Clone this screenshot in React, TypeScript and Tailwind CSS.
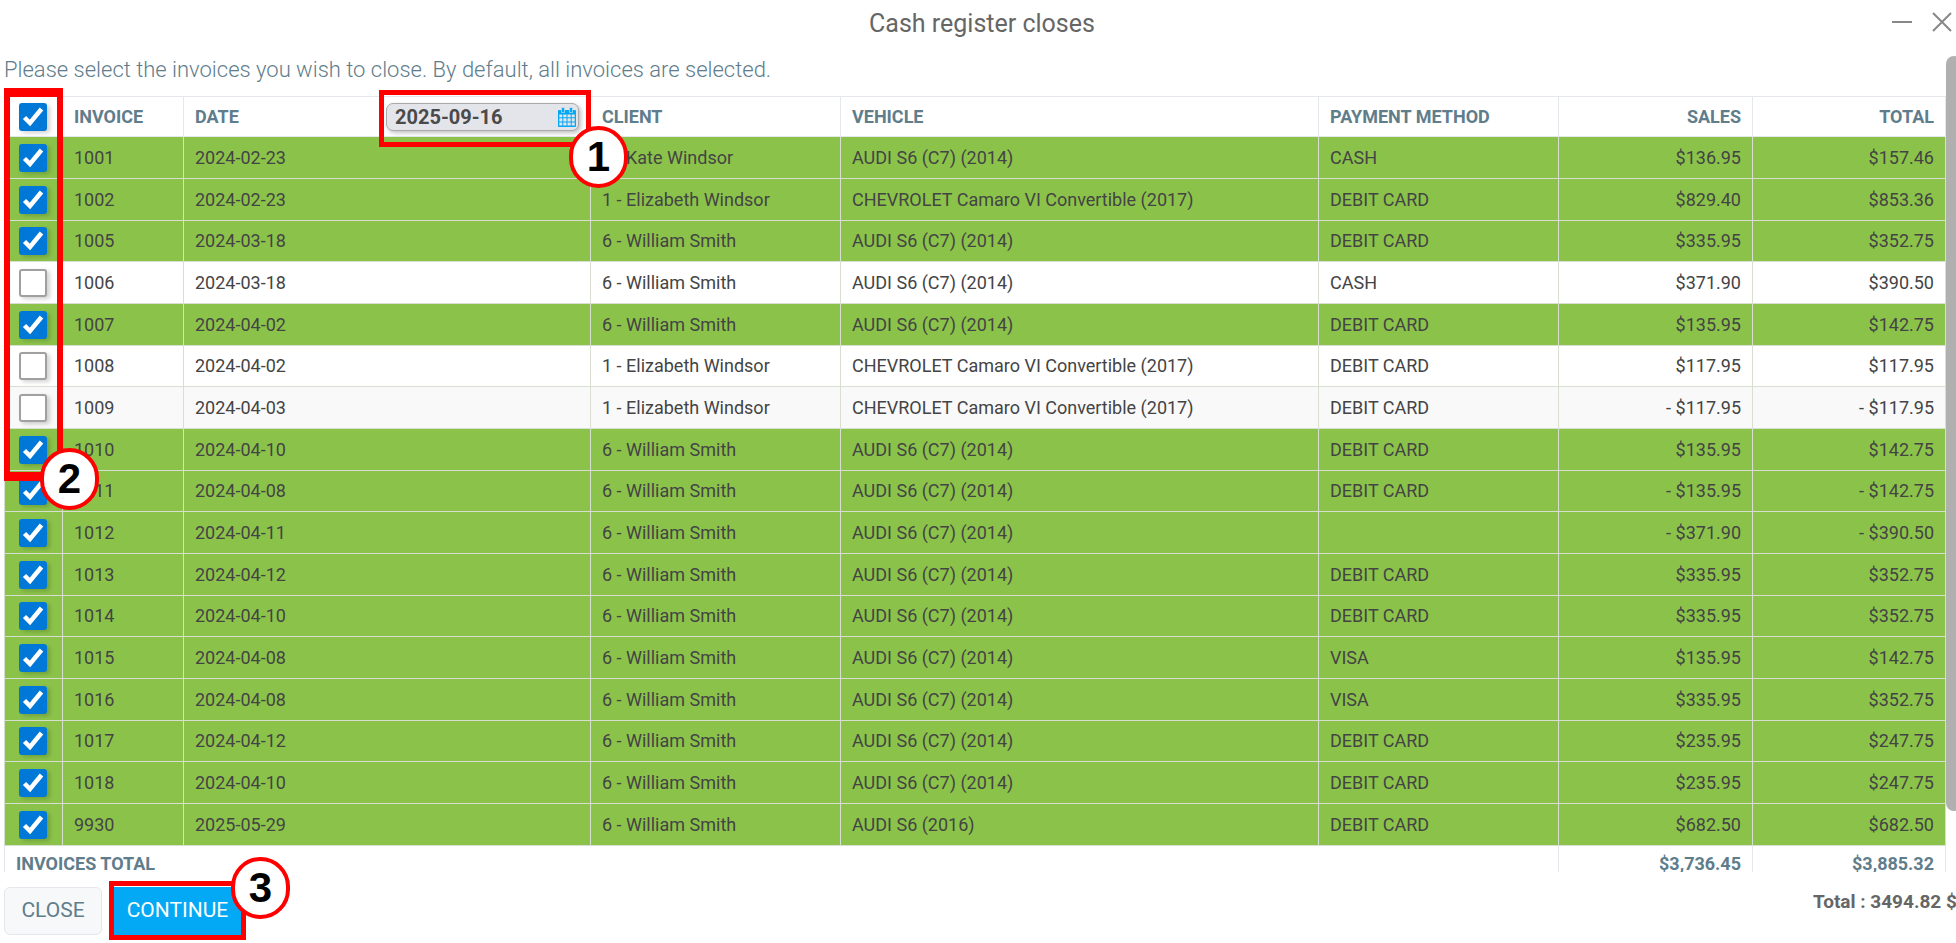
import { useState } from 'react';
import clsx from 'clsx';

type Invoice = {
  id: number;
  date: string;
  client: string;
  vehicle: string;
  payment: string;
  sales: string;
  total: string;
  selected: boolean;
};

const KATE = '1 - Kate Windsor';
const ELIZABETH = '1 - Elizabeth Windsor';
const WILLIAM = '6 - William Smith';
const AUDI = 'AUDI S6 (C7) (2014)';
const CAMARO = 'CHEVROLET Camaro VI Convertible (2017)';

const INVOICES: Invoice[] = [
  { id: 1001, date: '2024-02-23', client: KATE, vehicle: AUDI, payment: 'CASH', sales: '$136.95', total: '$157.46', selected: true },
  { id: 1002, date: '2024-02-23', client: ELIZABETH, vehicle: CAMARO, payment: 'DEBIT CARD', sales: '$829.40', total: '$853.36', selected: true },
  { id: 1005, date: '2024-03-18', client: WILLIAM, vehicle: AUDI, payment: 'DEBIT CARD', sales: '$335.95', total: '$352.75', selected: true },
  { id: 1006, date: '2024-03-18', client: WILLIAM, vehicle: AUDI, payment: 'CASH', sales: '$371.90', total: '$390.50', selected: false },
  { id: 1007, date: '2024-04-02', client: WILLIAM, vehicle: AUDI, payment: 'DEBIT CARD', sales: '$135.95', total: '$142.75', selected: true },
  { id: 1008, date: '2024-04-02', client: ELIZABETH, vehicle: CAMARO, payment: 'DEBIT CARD', sales: '$117.95', total: '$117.95', selected: false },
  { id: 1009, date: '2024-04-03', client: ELIZABETH, vehicle: CAMARO, payment: 'DEBIT CARD', sales: '- $117.95', total: '- $117.95', selected: false },
  { id: 1010, date: '2024-04-10', client: WILLIAM, vehicle: AUDI, payment: 'DEBIT CARD', sales: '$135.95', total: '$142.75', selected: true },
  { id: 1011, date: '2024-04-08', client: WILLIAM, vehicle: AUDI, payment: 'DEBIT CARD', sales: '- $135.95', total: '- $142.75', selected: true },
  { id: 1012, date: '2024-04-11', client: WILLIAM, vehicle: AUDI, payment: '', sales: '- $371.90', total: '- $390.50', selected: true },
  { id: 1013, date: '2024-04-12', client: WILLIAM, vehicle: AUDI, payment: 'DEBIT CARD', sales: '$335.95', total: '$352.75', selected: true },
  { id: 1014, date: '2024-04-10', client: WILLIAM, vehicle: AUDI, payment: 'DEBIT CARD', sales: '$335.95', total: '$352.75', selected: true },
  { id: 1015, date: '2024-04-08', client: WILLIAM, vehicle: AUDI, payment: 'VISA', sales: '$135.95', total: '$142.75', selected: true },
  { id: 1016, date: '2024-04-08', client: WILLIAM, vehicle: AUDI, payment: 'VISA', sales: '$335.95', total: '$352.75', selected: true },
  { id: 1017, date: '2024-04-12', client: WILLIAM, vehicle: AUDI, payment: 'DEBIT CARD', sales: '$235.95', total: '$247.75', selected: true },
  { id: 1018, date: '2024-04-10', client: WILLIAM, vehicle: AUDI, payment: 'DEBIT CARD', sales: '$235.95', total: '$247.75', selected: true },
  { id: 9930, date: '2025-05-29', client: WILLIAM, vehicle: 'AUDI S6 (2016)', payment: 'DEBIT CARD', sales: '$682.50', total: '$682.50', selected: true },
];

function Checkbox({ label, checked, onChange }: { label: string; checked: boolean; onChange: () => void }) {
  return (
    <span className="relative block h-7 w-7">
      <input
        type="checkbox"
        aria-label={label}
        checked={checked}
        onChange={onChange}
        className="block h-7 w-7 appearance-none rounded-[3px] border-2 border-[#a0a0a0] bg-white shadow-[3px_2px_4px_rgba(0,0,0,0.18)] checked:border-[#0078d7] checked:bg-[#0078d7]"
      />
      {checked && (
        <svg viewBox="0 0 28 28" className="pointer-events-none absolute inset-0 h-7 w-7" fill="none" stroke="#fff" strokeWidth="4.500">
          <path d="M5.500 14.500 L11 20 L22.500 6" />
        </svg>
      )}
    </span>
  );
}

function Step({ n, className }: { n: number; className: string }) {
  return (
    <span
      className={clsx(
        "pointer-events-none absolute z-20 flex h-[62px] w-[59px] items-center justify-center rounded-full border-4 border-[#ff0000] bg-white font-['Liberation_Sans',sans-serif] text-[42px] leading-none font-bold text-black",
        className
      )}
    >
      {n}
    </span>
  );
}

function CalendarIcon() {
  return (
    <svg viewBox="0 0 18 20" className="h-5 w-[18px] shrink-0">
      <path fill="#03a9f4" d="M1 3h16q1 0 1 1v15q0 1-1 1H1q-1 0-1-1V4q0-1 1-1z" />
      <path fill="#03a9f4" stroke="#e4e5ea" strokeWidth=".6" d="M3.500 .5h3v5h-3zM11.500 .5h3v5h-3z" />
      <path
        fill="#e4e5ea"
        d="M1.300 7.500h3v2.800h-3zM5.300 7.500h3.200v2.800H5.300zM9.500 7.500h3.200v2.800H9.500zM13.700 7.500h3v2.800h-3zM1.300 11.300h3v3.200h-3zM5.300 11.300h3.200v3.200H5.300zM9.500 11.300h3.200v3.200H9.500zM13.700 11.300h3v3.200h-3zM1.300 15.500h3v3h-3zM5.300 15.500h3.200v3H5.300zM9.500 15.500h3.200v3H9.500zM13.700 15.500h3v3h-3z"
      />
    </svg>
  );
}

export default function App() {
  const [invoices, setInvoices] = useState(INVOICES);
  const [allChecked, setAllChecked] = useState(true);
  const [date, setDate] = useState('2025-09-16');

  const toggleAll = () => {
    setInvoices(invoices.map((inv) => ({ ...inv, selected: !allChecked })));
    setAllChecked(!allChecked);
  };

  const toggle = (id: number) => {
    setInvoices(invoices.map((inv) => (inv.id === id ? { ...inv, selected: !inv.selected } : inv)));
  };

  return (
    <div className="flex h-screen flex-col overflow-hidden bg-white font-[Roboto,sans-serif] text-[#444]">
      <header className="grid h-14 shrink-0 grid-cols-[1fr_auto_1fr] items-start pr-1">
        <h1 className="col-start-2 pt-2 pl-3 text-[25px] leading-8 text-[#666]">Cash register closes</h1>
        <div className="flex justify-end gap-5 pt-3 text-[#888]">
          <button type="button" aria-label="Minimize">
            <svg viewBox="0 0 20 20" className="h-5 w-5" stroke="currentColor" strokeWidth="2">
              <path d="M0 10h20" />
            </svg>
          </button>
          <button type="button" aria-label="Close window">
            <svg viewBox="0 0 20 20" className="h-5 w-5" stroke="currentColor" strokeWidth="2">
              <path d="M1 1l18 18M19 1L1 19" />
            </svg>
          </button>
        </div>
      </header>

      <main className="flex min-h-0 flex-1 overflow-hidden">
        <div className="min-w-0 flex-1 pl-1">
          <p className="h-10 text-[22px] leading-[28px] font-light text-[#607d8b]">
            Please select the invoices you wish to close. By default, all invoices are selected.
          </p>
          <table className="w-full table-fixed border-collapse text-left text-[18px] leading-5 [&_td]:border [&_td]:border-[#d8dfd0] [&_td]:py-0 [&_td]:pr-[11px] [&_td]:pl-[11px] [&_th]:border [&_th]:border-[#e4e8ec] [&_th]:py-0 [&_th]:pr-[11px] [&_th]:pl-[11px] [&_th]:font-bold [&_th]:text-[#607d8b] [&_tr>*:first-child:not([colspan])]:pl-[14px]">
            <colgroup>
              <col className="w-[58px]" />
              <col className="w-[121px]" />
              <col className="w-[407px]" />
              <col className="w-[250px]" />
              <col />
              <col className="w-[240px]" />
              <col className="w-[194px]" />
              <col className="w-[193px]" />
            </colgroup>
            <thead>
              <tr className="h-10">
                <th className="relative">
                  <Checkbox label="Select all invoices" checked={allChecked} onChange={toggleAll} />
                  <div className="pointer-events-none absolute -top-[9px] -left-px z-10 h-[393px] w-[59px] border-x-[6px] border-y-[9px] border-[#ff0000]">
                    <Step n={2} className="-right-[42px] -bottom-[38px]" />
                  </div>
                </th>
                <th>INVOICE</th>
                <th className="relative">
                  <div className="flex items-center justify-between">
                    DATE
                    <label className="relative flex h-7 w-[193px] items-center rounded-[7px] border border-[#aaa] bg-[#e4e5ea] pr-0.5 pl-2 shadow-[2px_2px_4px_rgba(0,0,0,0.25)]">
                      <input
                        type="text"
                        aria-label="Closing date"
                        value={date}
                        onChange={(e) => setDate(e.target.value)}
                        className="min-w-0 flex-1 text-[20px] leading-6 font-bold text-[#4a4a4a] outline-none"
                      />
                      <CalendarIcon />
                      <div className="pointer-events-none absolute -top-[14px] -right-[13px] -bottom-[17px] -left-[8px] z-10 border-[5px] border-[#ff0000]">
                        <Step n={1} className="-right-[42px] -bottom-[46px]" />
                      </div>
                    </label>
                  </div>
                </th>
                <th>CLIENT</th>
                <th>VEHICLE</th>
                <th>PAYMENT METHOD</th>
                <th className="text-right">SALES</th>
                <th className="text-right">TOTAL</th>
              </tr>
            </thead>
            <tbody>
              {invoices.map((inv) => (
                <tr
                  key={inv.id}
                  className={clsx('h-[42px] nth-[3n]:h-[41px]', inv.selected ? 'bg-[#8bc34a]' : 'bg-white odd:bg-[#f9f9f9]')}
                >
                  <td>
                    <Checkbox label={`Invoice ${inv.id}`} checked={inv.selected} onChange={() => toggle(inv.id)} />
                  </td>
                  <td>{inv.id}</td>
                  <td>{inv.date}</td>
                  <td>{inv.client}</td>
                  <td>{inv.vehicle}</td>
                  <td>{inv.payment}</td>
                  <td className="text-right">{inv.sales}</td>
                  <td className="text-right">{inv.total}</td>
                </tr>
              ))}
            </tbody>
            <tfoot>
              <tr className="h-[37px]">
                <th colSpan={6}>INVOICES TOTAL</th>
                <th className="text-right">$3,736.45</th>
                <th className="text-right">$3,885.32</th>
              </tr>
            </tfoot>
          </table>
        </div>
        <div className="w-[10px] shrink-0">
          <div className="h-[755px] w-4 rounded-lg bg-[#b0b0b0]" />
        </div>
      </main>

      <footer className="flex h-[71px] shrink-0 items-start justify-between pt-[15px] pl-1">
        <div className="flex gap-3">
          <button type="button" className="h-12 w-[98px] rounded-md border border-[#e4e8ec] bg-[#f7f8fa] text-[21px] text-[#607d8b]">
            CLOSE
          </button>
          <div className="relative">
            <button type="button" className="h-12 w-[127px] bg-[#03a9f4] text-[21px] text-white">
              CONTINUE
            </button>
            <div className="pointer-events-none absolute -inset-x-[5px] -top-[6px] -bottom-[5px] border-[5px] border-[#ff0000]">
              <Step n={3} className="-top-[29px] -right-[49px]" />
            </div>
          </div>
        </div>
        <div className="w-[143px] shrink-0 overflow-hidden text-[19px] leading-[30px] font-bold whitespace-nowrap text-[#666]">
          Total : 3494.82 $
        </div>
      </footer>
    </div>
  );
}
